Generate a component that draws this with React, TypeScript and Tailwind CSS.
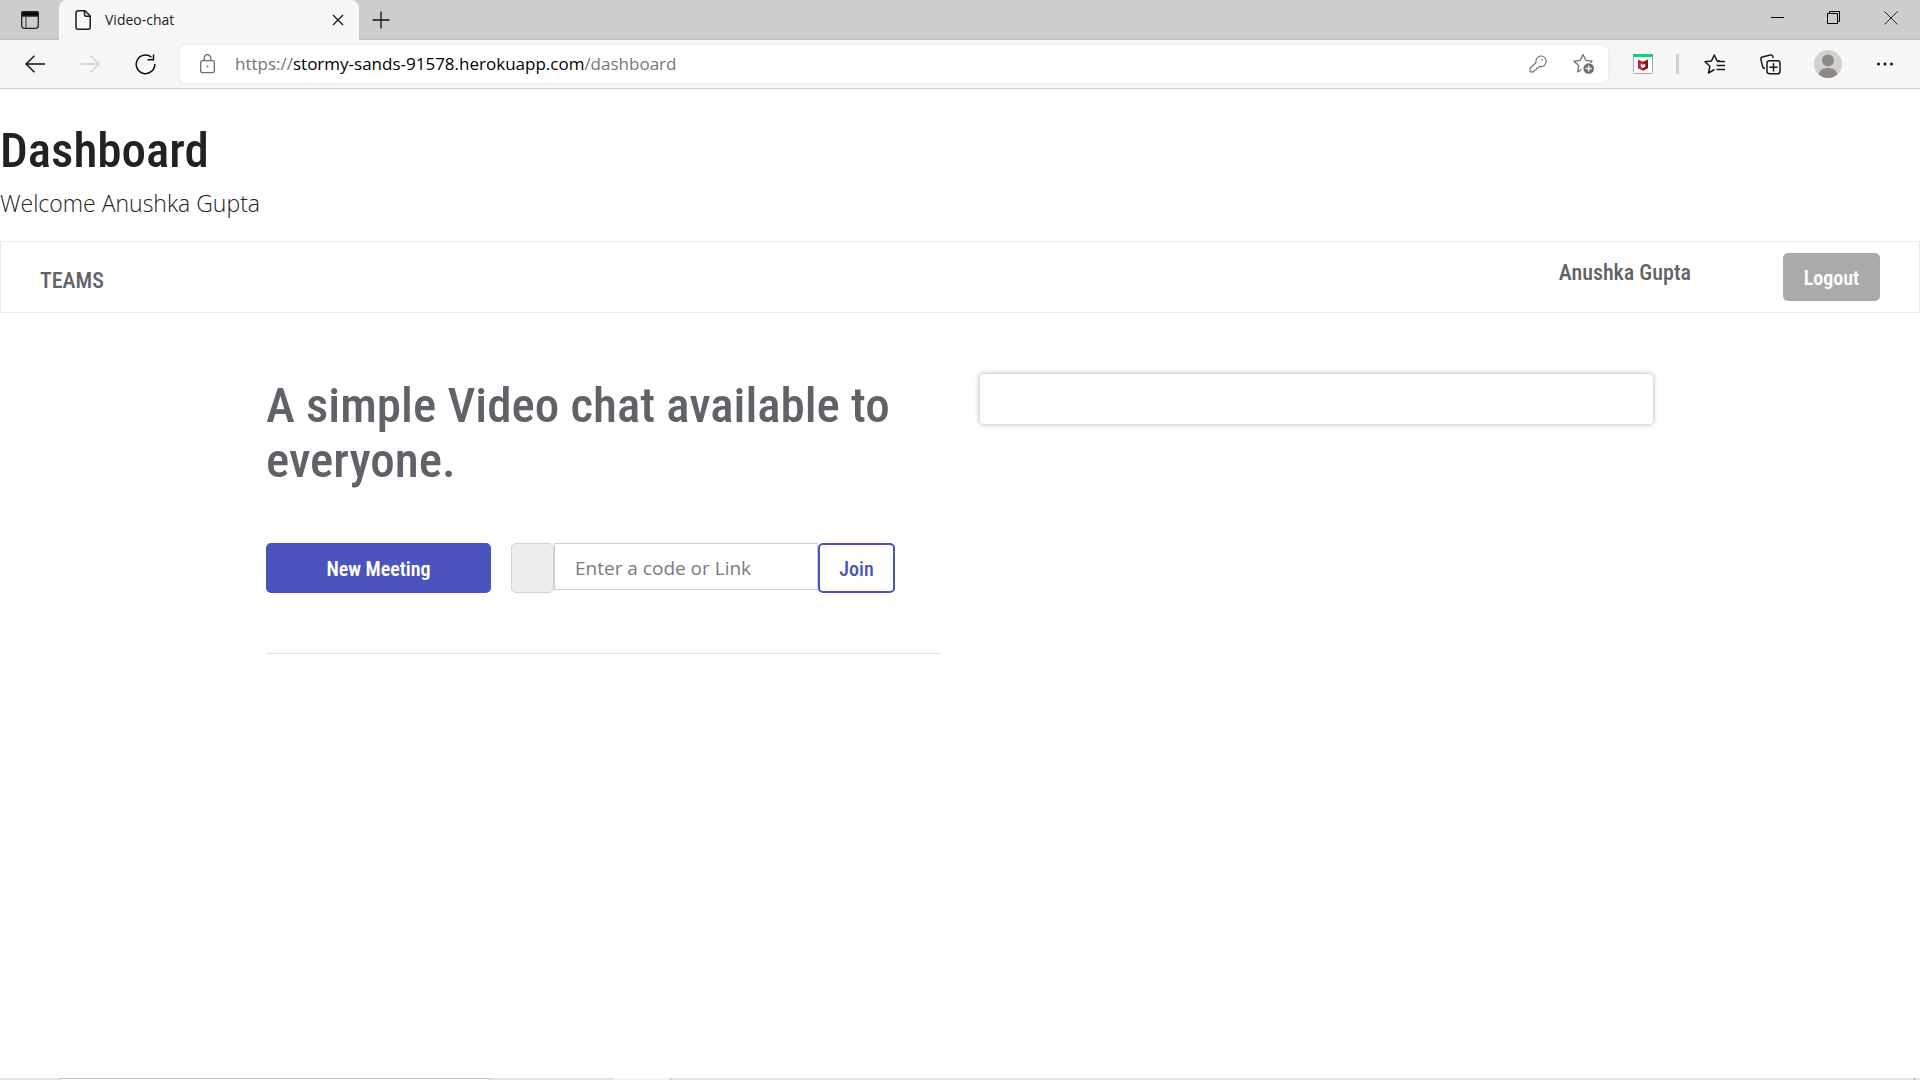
import type { ReactNode } from 'react';

const display = "font-['Roboto_Condensed','Open_Sans_Condensed',sans-serif]";
const ui = "font-['Open_Sans',sans-serif]";

function IconButton({ label, className, children, disabled }: { label: string; className: string; children: ReactNode; disabled?: boolean }) {
  return (
    <button type="button" aria-label={label} disabled={disabled} className={`flex shrink-0 items-center justify-center ${className}`}>
      {children}
    </button>
  );
}

function TabStrip() {
  return (
    <div className="flex h-10 border-b border-[#bdbdbd] bg-[#cdcdcd]">
      <IconButton label="Tab actions" className="w-[59px]">
        <svg width="18" height="18" viewBox="0 0 18 18" fill="none" stroke="#222" strokeWidth="1.3">
          <rect x="0.7" y="0.7" width="16.6" height="16.6" rx="2.5" />
          <path d="M1 1h16v4H1z" fill="#000" />
          <path d="M5 5v12" stroke="#555" />
        </svg>
      </IconButton>
      <div className="-mb-px flex w-[300px] items-center rounded-t-lg bg-[#f7f7f7] pr-[15px] pl-4">
        <svg width="16" height="20" viewBox="0 0 16 20" fill="none" stroke="#1b1b1b" strokeWidth="1.5" strokeLinejoin="round">
          <path d="M3 .8h7L15.2 6v11.2a2 2 0 0 1-2 2H3a2 2 0 0 1-2-2V2.800a2 2 0 0 1 2-2z" />
          <path d="M9.500 1v3.700a1.500 1.500 0 0 0 1.500 1.500h4" />
        </svg>
        <span className="ml-[14px] flex-1 text-sm text-[#1b1b1b]">Video-chat</span>
        <IconButton label="Close tab" className="size-3">
          <svg width="12" height="12" viewBox="0 0 12 12" stroke="#1b1b1b" strokeWidth="1.400">
            <path d="M1 1l10 10M11 1L1 11" />
          </svg>
        </IconButton>
      </div>
      <IconButton label="New tab" className="w-11">
        <svg width="18" height="18" viewBox="0 0 18 18" stroke="#111" strokeWidth="1.300">
          <path d="M9 .5v17M.5 9h17" />
        </svg>
      </IconButton>
      <div className="ml-auto flex pb-1">
        <IconButton label="Minimize" className="w-14">
          <svg width="13" height="13" viewBox="0 0 13 13" stroke="#000">
            <path d="M0 6.500h13" />
          </svg>
        </IconButton>
        <IconButton label="Restore" className="w-14">
          <svg width="13" height="13" viewBox="0 0 13 13" fill="none" stroke="#000">
            <path d="M.5 2.500h10v10H.5zM2.500 2.500v-2h10v10h-2" />
          </svg>
        </IconButton>
        <IconButton label="Close" className="w-[59px]">
          <svg width="14" height="14" viewBox="0 0 14 14" stroke="#222">
            <path d="M.5 .5l13 13M13.500 .5l-13 13" />
          </svg>
        </IconButton>
      </div>
    </div>
  );
}

function Toolbar() {
  return (
    <div className="flex h-[49px] items-center border-b border-[#cfcfcf] bg-[#f7f7f7]">
      <IconButton label="Back" className="ml-[15px] w-10">
        <svg width="20" height="18" viewBox="0 0 20 18" fill="none" stroke="#111" strokeWidth="1.400">
          <path d="M9.500 .7L1 9l8.500 8.300M1 9h19" />
        </svg>
      </IconButton>
      <IconButton label="Forward" disabled className="ml-[15px] w-10">
        <svg width="20" height="18" viewBox="0 0 20 18" fill="none" stroke="#cfcfcf" strokeWidth="1.400">
          <path d="M10.500 .7L19 9l-8.500 8.300M19 9H0" />
        </svg>
      </IconButton>
      <IconButton label="Refresh" className="ml-[15px] w-10">
        <svg width="21" height="21" viewBox="0 0 21 21" fill="none" stroke="#111" strokeWidth="1.500">
          <path d="M16.500 3.200A9.300 9.300 0 1 0 19.800 10" />
          <path d="M12.500 5.700h6V.5" />
        </svg>
      </IconButton>
      <div className="ml-[15px] flex h-[38px] flex-1 items-center rounded-md bg-white pr-[13px] pl-5 shadow-[0_0_4px_#e2e2e2]">
        <svg width="15" height="20" viewBox="0 0 15 20" fill="none" stroke="#6d6d6d" strokeWidth="1.300">
          <rect x=".7" y="6.700" width="13.600" height="12" rx="1.800" />
          <path d="M4.200 6.700V4a3.300 3.300 0 0 1 6.600 0v2.700" />
          <circle cx="7.500" cy="12.500" r="1" fill="#6d6d6d" stroke="none" />
        </svg>
        <div className="ml-5 flex-1 text-[17px] leading-6 text-[#767676]">
          https://<span className="text-black">stormy-sands-91578.herokuapp.com</span>/dashboard
        </div>
        <IconButton label="Passwords" className="w-5">
          <svg width="18" height="18" viewBox="0 0 18 18" fill="none" stroke="#767676" strokeWidth="1.200" strokeLinejoin="round">
            <path d="M11.500 1a5.300 5.300 0 1 1-1 10.400L9 13H7.500v1.500L6 15l-1.500 1.800H1V13.500l6-6A5.500 5.500 0 0 1 11.500 1z" />
            <circle cx="13" cy="4.800" r=".9" fill="#767676" stroke="none" />
          </svg>
        </IconButton>
        <IconButton label="Add this page to favorites" className="ml-[25px] w-[22px]">
          <svg width="22" height="22" viewBox="0 0 22 22" fill="none" stroke="#6e6e6e" strokeWidth="1.300" strokeLinejoin="round">
            <path d="M8.500 16.500L4.700 19l1-6.500L1 8.200l6.200-.9L10 1.500l2.800 5.800 6.200.9-1.500 1.600" />
            <circle cx="15.700" cy="15.500" r="5.300" fill="#6e6e6e" stroke="none" />
            <path d="M12.800 15.500h5.800M15.700 12.600v5.800" stroke="#fff" />
          </svg>
        </IconButton>
      </div>
      <IconButton label="McAfee WebAdvisor" className="ml-[25px] w-5">
        <svg width="20" height="20" viewBox="0 0 20 20">
          <rect x=".5" y=".5" width="19" height="19" rx="1" fill="#fff" stroke="#a8a8a8" />
          <path d="M0 0h20v3H0z" fill="#0fd27f" />
          <path d="M5 5.500l5 2.300v3l-2.200-1.200v3.200l2.200 1.300v2.700l-5-2.600z" fill="#d01f2b" />
          <path d="M15 5.500l-5 2.300v3l2.200-1.200v3.200L10 14.100v2.700l5-2.600z" fill="#8f1219" />
        </svg>
      </IconButton>
      <div className="ml-[23px] h-5 w-[3px] bg-[#d0d0d0]" />
      <IconButton label="Favorites" className="ml-[25px] w-[22px]">
        <svg width="22" height="20" viewBox="0 0 22 20" fill="none" stroke="#1b1b1b" strokeWidth="1.500" strokeLinejoin="round">
          <path d="M10.500 15.500L4.500 19l1.400-6.800L1 7.700l6.500-.8L10.300 1 13 6.900h3" />
          <path d="M13.500 7.500h7.500M12.500 11.500h8.500M12.500 15.500h8.500" />
        </svg>
      </IconButton>
      <IconButton label="Collections" className="ml-[34px] w-[21px]">
        <svg width="21" height="21" viewBox="0 0 21 21" fill="none" stroke="#1b1b1b" strokeWidth="1.500">
          <path d="M5 14.500c-1.500 0-2-.6-2.300-1.700L.9 5.600c-.3-1.200.2-2.200 1.400-2.500l8-2.100c1.200-.3 2.200.3 2.500 1.500l.4 1.500" />
          <rect x="7" y="6.800" width="13" height="13" rx="2.500" />
          <path d="M13.500 9.200v8.200M9.400 13.300h8.200" />
        </svg>
      </IconButton>
      <IconButton label="Profile" className="ml-[33px] w-7">
        <svg width="28" height="28" viewBox="0 0 28 28">
          <circle cx="14" cy="14" r="14" fill="#d3d1cf" />
          <circle cx="14" cy="10.500" r="6" fill="#8d8985" />
          <path d="M4.500 24.300C5.500 20 9 18 14 18s8.500 2 9.500 6.300A14 14 0 0 1 4.500 24.300z" fill="#8d8985" />
        </svg>
      </IconButton>
      <IconButton label="Settings and more" className="mr-[27px] ml-[35px] w-4">
        <svg width="16" height="4" viewBox="0 0 16 4" fill="#111">
          <circle cx="1.500" cy="2" r="1.500" />
          <circle cx="8" cy="2" r="1.500" />
          <circle cx="14.500" cy="2" r="1.500" />
        </svg>
      </IconButton>
    </div>
  );
}

export default function App() {
  return (
    <div className={`flex min-h-screen flex-col bg-white ${ui}`}>
      <header>
        <TabStrip />
        <Toolbar />
      </header>
      <main className="flex-1">
        <h1 className={`pt-8 text-[49px] leading-[60px] font-medium text-[#222] ${display}`}>Dashboard</h1>
        <p className="mt-1 text-[23px] leading-9 font-light text-[#222]">Welcome Anushka Gupta</p>
        <nav className={`mt-5 flex h-[72px] items-center border border-[#ebebeb] px-[39px] font-medium text-[#5f6368] ${display}`}>
          <a href="#teams" className="pt-1.5 text-[22px]">TEAMS</a>
          <span className="mr-[92px] mb-2.5 ml-auto text-[22px]">Anushka Gupta</span>
          <button type="button" className="h-12 w-[97px] rounded-[5px] bg-[#aaa] pt-0.5 text-[20px] font-semibold text-white">Logout</button>
        </nav>
        <div className="mx-auto mt-[60px] grid max-w-[1388px] grid-cols-2 items-start gap-[38px]">
          <section className="border-b border-[#e3e3e3] pb-[60px]">
            <h2 className={`pt-[5px] text-[49px] leading-[55px] font-medium text-[#5f6368] ${display}`}>
              A simple Video chat available to everyone.
            </h2>
            <div className="mt-[55px] flex items-start">
              <button type="button" className={`h-[50px] w-[225px] rounded-[5px] bg-[#4b53bc] pt-0.5 text-[20px] font-semibold text-white ${display}`}>New Meeting</button>
              <div className="ml-5 h-[50px] w-[43px] rounded-[5px] border border-[#d1d4db] bg-[#eee]" />
              <input type="text" aria-label="Meeting code or link" placeholder="Enter a code or Link" className="h-[47px] w-[264px] border border-[#ced0d6] px-5 pt-0.5 text-[19px] placeholder:text-[#7b7b7b]" />
              <button type="button" className={`h-[50px] w-[77px] rounded-[5px] border-2 border-[#4b53bc] bg-white pt-0.5 text-[20px] font-medium text-[#4b53bc] ${display}`}>Join</button>
            </div>
          </section>
          <section aria-label="Preview" className="mx-px mt-px h-[50px] rounded-sm bg-white shadow-[0_0_5px_1px_#c4c4c4]" />
        </div>
      </main>
      <footer className="flex h-0.5 bg-[#e2e2e2]">
        <div className="ml-[60px] w-[430px] border border-b-0 border-[#c4c4c4] bg-white" />
        <div className="ml-[124px] w-14 bg-[#f4f4f4]" />
        <div className="w-px bg-[#bbb]" />
        <div className="mr-[5px] ml-auto w-px bg-[#aaa]" />
      </footer>
    </div>
  );
}
